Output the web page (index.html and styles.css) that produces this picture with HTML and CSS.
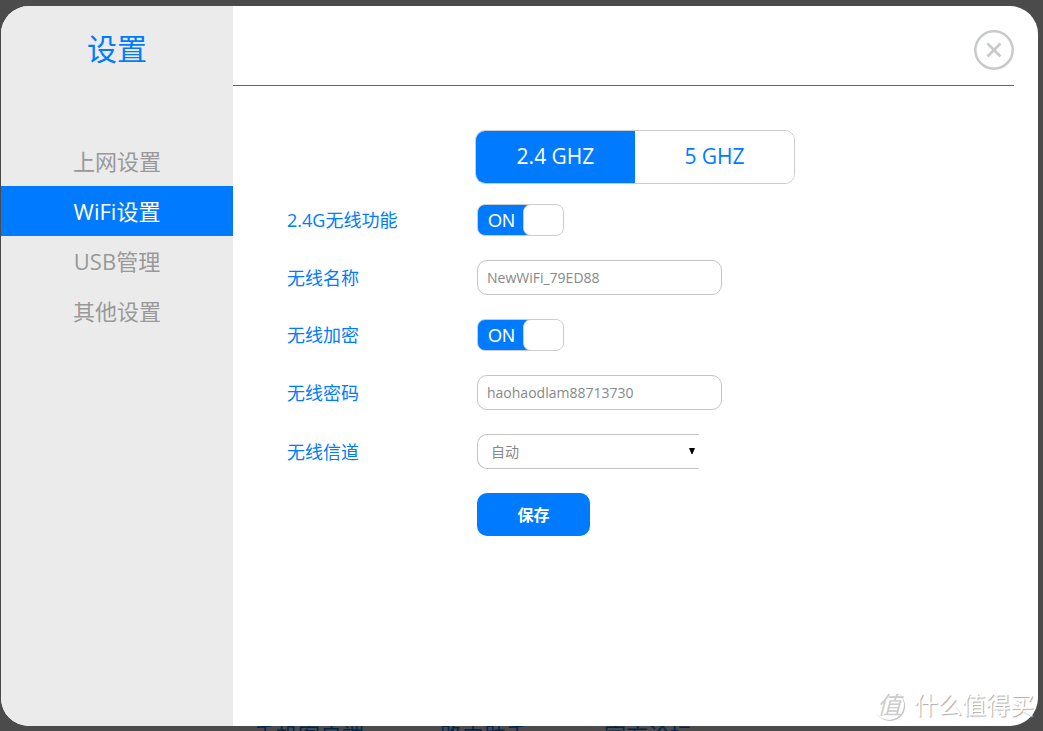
FILE: index.html
```
<!DOCTYPE html>
<html lang="zh-CN">
<head>
<meta charset="utf-8">
<title>设置</title>
<link rel="stylesheet" href="styles.css">
</head>
<body>
<div class="page-links">
  <a href="#client">手机客户端</a>
  <a href="#helper">路由助手</a>
  <a href="#forum">官方论坛</a>
</div>
<div class="dialog" role="dialog" aria-labelledby="title">
  <aside class="sidebar">
    <h1 class="title" id="title">设置</h1>
    <nav class="menu">
      <a class="menu-item" href="#wan">上网设置</a>
      <a class="menu-item active" href="#wifi">WiFi设置</a>
      <a class="menu-item" href="#usb">USB管理</a>
      <a class="menu-item" href="#other">其他设置</a>
    </nav>
  </aside>
  <main class="main">
    <header class="header">
      <button class="close" type="button" aria-label="关闭">
        <svg width="40" height="40" viewBox="0 0 40 40" fill="none" stroke="#c8caca">
          <circle cx="20" cy="20" r="18.7" stroke-width="2.5"/>
          <path d="M13.5 13.5L26.5 26.5M26.5 13.5L13.5 26.5" stroke-width="2.7"/>
        </svg>
      </button>
    </header>
    <div class="tabs">
      <button class="tab selected" type="button">2.4 GHZ</button>
      <button class="tab" type="button">5 GHZ</button>
    </div>
    <form class="form">
      <div class="row">
        <label class="label" for="radio">2.4G无线功能</label>
        <span class="switch"><input class="switch-input" type="checkbox" id="radio" checked><span class="switch-text">ON</span><span class="knob"></span></span>
      </div>
      <div class="row">
        <label class="label" for="ssid">无线名称</label>
        <input class="field" type="text" id="ssid" value="NewWiFi_79ED88">
      </div>
      <div class="row">
        <label class="label" for="encrypt">无线加密</label>
        <span class="switch"><input class="switch-input" type="checkbox" id="encrypt" checked><span class="switch-text">ON</span><span class="knob"></span></span>
      </div>
      <div class="row">
        <label class="label" for="password">无线密码</label>
        <input class="field" type="text" id="password" value="haohaodlam88713730">
      </div>
      <div class="row">
        <label class="label" for="channel">无线信道</label>
        <span class="select-box">
          <select class="field select" id="channel"><option>自动</option></select>
          <svg class="arrow" width="6" height="6" viewBox="0 0 6 6"><path d="M0 0H6L3.5 6H2.5Z"/></svg>
        </span>
      </div>
      <button class="save" type="button">保存</button>
    </form>
  </main>
</div>
<div class="watermark">
  <span class="watermark-badge">值</span>
  <span>什么值得买</span>
</div>
</body>
</html>
```
FILE: styles.css
```
* {
  box-sizing: border-box;
}

body {
  position: relative;
  margin: 0;
  min-height: 100vh;
  padding: 6px 5px 5px 1px;
  display: flex;
  overflow: hidden;
  background: #4b4b4b;
  color: #007bff;
  font-family: "Open Sans", "Noto Sans CJK SC", sans-serif;
}

button, input, select {
  font-family: inherit;
  margin: 0;
}

a {
  color: inherit;
  text-decoration: none;
}

.page-links {
  position: absolute;
  left: 254px;
  top: 718px;
  display: flex;
  gap: 76px;
  color: #00264f;
  font-size: 22px;
  line-height: 32px;
  white-space: nowrap;
}

.dialog {
  position: relative;
  flex: 1;
  display: flex;
  overflow: hidden;
  border-radius: 28px;
  background: #fff;
}

.sidebar {
  width: 232px;
  flex: none;
  background: #ebebeb;
  text-align: center;
}

.title {
  margin: 0;
  padding-top: 21px;
  font-size: 30px;
  font-weight: 400;
  line-height: 44px;
}

.menu {
  padding-top: 65px;
}

.menu-item {
  display: block;
  color: #999;
  font-size: 22px;
  line-height: 50px;
}

.menu-item.active {
  background: #007bff;
  color: #fff;
}

.main {
  flex: 1;
}

.header {
  height: 80px;
  margin-right: 24px;
  padding-top: 24px;
  border-bottom: 1px solid #007bff;
  text-align: right;
}

.close {
  width: 40px;
  height: 40px;
  padding: 0;
  border: 0;
  background: none;
}

.close svg {
  display: block;
}

.tabs {
  display: flex;
  width: 320px;
  height: 54px;
  margin: 44px 0 20px 242px;
  overflow: hidden;
  border: 1px solid #ccc;
  border-radius: 10px;
}

.tab {
  flex: 1;
  padding: 0 0 2px;
  border: 0;
  background: #fff;
  color: #007bff;
  font-size: 21px;
}

.tab.selected {
  background: #007bff;
  color: #fff;
}

.form {
  display: flex;
  flex-direction: column;
  gap: 24px;
  padding-left: 54px;
}

.row {
  display: flex;
  align-items: center;
}

.label {
  width: 190px;
  font-size: 18px;
  line-height: 32px;
}

.switch {
  position: relative;
  display: flex;
  width: 87px;
  height: 32px;
  overflow: hidden;
  border: 1px solid #ccc;
  border-radius: 8px;
  background: linear-gradient(to right, #007bff 60%, #fff 60%);
}

.switch-input {
  position: absolute;
  inset: 0;
  width: 100%;
  height: 100%;
  margin: 0;
  opacity: 0;
}

.switch-text {
  flex: 1;
  padding-left: 1px;
  color: #fff;
  font-family: "Liberation Sans", sans-serif;
  font-size: 18px;
  line-height: 32px;
  text-align: center;
}

.knob {
  width: 41px;
  margin: -1px;
  border: 1px solid #ccc;
  border-radius: 8px;
  background: #fff;
}

.field {
  width: 245px;
  height: 35px;
  padding: 0 9px;
  border: 1px solid #c4c4c4;
  border-radius: 10px;
  background: #fff;
  color: #888;
  font-size: 14px;
}

.select-box {
  position: relative;
  display: flex;
}

.select {
  width: 222px;
  padding: 0 13px;
  appearance: none;
  border-right: 0;
  border-radius: 10px 0 0 10px;
}

.arrow {
  position: absolute;
  right: 4px;
  top: 14px;
  pointer-events: none;
}

.save {
  width: 113px;
  height: 43px;
  margin-left: 190px;
  padding: 0 0 2px;
  border: 0;
  border-radius: 10px;
  background: #007bff;
  color: #fff;
  font-size: 16px;
  font-weight: 700;
}

.watermark {
  position: absolute;
  right: 9px;
  bottom: 10px;
  display: flex;
  align-items: center;
  gap: 10px;
  color: #fff;
  font-size: 24px;
  line-height: 32px;
  text-shadow: 1px 1px 1px #aaa;
}

.watermark-badge {
  width: 30px;
  border-radius: 50%;
  box-shadow: 1px 1px 1px #bbb;
  color: #ccc;
  font-size: 24px;
  font-style: italic;
  line-height: 30px;
  text-align: center;
  text-shadow: none;
}
```
